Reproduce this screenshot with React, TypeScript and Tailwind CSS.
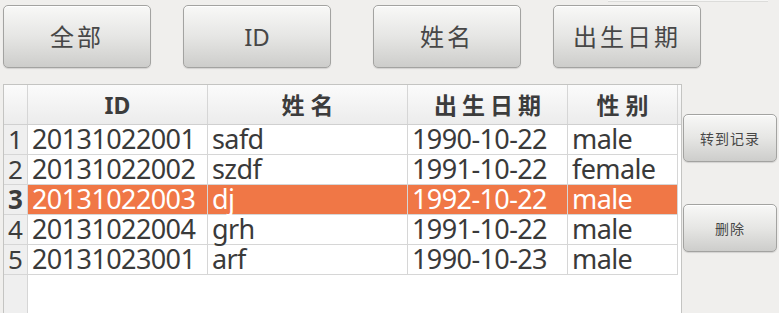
const rows = [
  { id: "20131022001", name: "safd", date: "1990-10-22", sex: "male" },
  { id: "20131022002", name: "szdf", date: "1991-10-22", sex: "female" },
  { id: "20131022003", name: "dj", date: "1992-10-22", sex: "male" },
  { id: "20131022004", name: "grh", date: "1991-10-22", sex: "male" },
  { id: "20131023001", name: "arf", date: "1990-10-23", sex: "male" },
];

const font = "font-['Noto_Sans','Noto_Sans_CJK_SC',sans-serif]";

function BigButton({ label, className }: { label: string; className?: string }) {
  return (
    <button
      className={`w-[148px] h-[63px] rounded-[5px] border border-[#a3a3a1] bg-gradient-to-b from-[#f8f8f7] via-[#e6e6e4] to-[#cdcdcb] shadow-[inset_0_1px_0_#ffffff,0_1px_1px_rgba(0,0,0,0.12)] text-[24px] text-[#474747] flex items-center justify-center ${className ?? ""}`}
    >
      {label}
    </button>
  );
}

function SmallButton({ label, className }: { label: string; className?: string }) {
  return (
    <button
      className={`w-[94px] h-[48px] rounded-[5px] border border-[#a3a3a1] bg-gradient-to-b from-[#f8f8f7] via-[#e6e6e4] to-[#cdcdcb] shadow-[inset_0_1px_0_#ffffff,0_1px_1px_rgba(0,0,0,0.12)] text-[14px] tracking-[1px] text-[#474747] flex items-center justify-center ${className ?? ""}`}
    >
      {label}
    </button>
  );
}

export default function App() {
  return (
    <div className={`w-[779px] h-[313px] bg-[#f0efed] overflow-hidden relative ${font}`}>
      {/* strip of a widget cut off at the top */}
      <div className="absolute top-0 left-[608px] w-[160px] h-[2px] bg-[#f6f6f5] border-b border-[#dcdcda]" />

      {/* Sort buttons */}
      <div className="flex pt-[5px] pl-[3px]">
        <BigButton label="全部" className="tracking-[3px]" />
        <BigButton label="ID" className="ml-[32px]" />
        <BigButton label="姓名" className="ml-[42px] tracking-[3px]" />
        <BigButton label="出生日期" className="ml-[32px] tracking-[3px]" />
      </div>

      <div className="flex mt-[16px] pl-[3px]">
        {/* Table */}
        <div className="w-[679px] h-[240px] border border-[#c4c4c2] bg-white flex flex-col">
          {/* Header */}
          <div className="flex h-[40px] leading-[40px] bg-gradient-to-b from-[#fbfbfb] to-[#ececec] border-b border-[#d0d0d0] text-[23px] font-bold text-[#3c3c3c]">
            <div className="w-[24px] border-r border-[#d6d6d6]" />
            <div className="w-[180px] border-r border-[#d6d6d6] flex items-center justify-center">ID</div>
            <div className="w-[200px] border-r border-[#d6d6d6] flex items-center justify-center tracking-[6px] pl-[6px]">姓名</div>
            <div className="w-[160px] border-r border-[#d6d6d6] flex items-center justify-center tracking-[5px] pl-[5px]">出生日期</div>
            <div className="w-[110px] border-r border-[#d6d6d6] flex items-center justify-center tracking-[6px] pl-[6px]">性别</div>
          </div>

          <div className="flex flex-1">
            {/* Vertical header */}
            <div className="w-[24px] bg-[#efefef] border-r border-[#d6d6d6] flex flex-col">
              {rows.map((_, i) => (
                <div
                  key={i}
                  className={`h-[30px] leading-[28px] pb-[1px] border-b border-[#d6d6d6] flex items-center justify-center text-[26px] text-[#3c3c3c] ${i === 2 ? "font-bold" : ""}`}
                >
                  {i + 1}
                </div>
              ))}
            </div>

            {/* Cells */}
            <div className="flex flex-col">
              {rows.map((r, i) => {
                const sel = i === 2;
                const cell = `h-[30px] leading-[28px] pb-[1px] pl-[4px] flex items-center border-r border-b border-[#d6d6d6] whitespace-nowrap`;
                return (
                  <div
                    key={r.id}
                    className={`flex text-[27px] tracking-[-0.6px] ${sel ? "bg-[#f07746] text-white" : "text-[#3a3a3a]"}`}
                  >
                    <div className={`w-[180px] ${cell}`}>{r.id}</div>
                    <div className={`w-[200px] ${cell}`}>{r.name}</div>
                    <div className={`w-[160px] ${cell}`}>{r.date}</div>
                    <div className={`w-[110px] ${cell}`}>{r.sex}</div>
                  </div>
                );
              })}
            </div>
          </div>
        </div>

        {/* Side actions */}
        <div className="flex flex-col ml-px pt-[30px]">
          <SmallButton label="转到记录" />
          <SmallButton label="删除" className="mt-[42px]" />
        </div>
      </div>
    </div>
  );
}
